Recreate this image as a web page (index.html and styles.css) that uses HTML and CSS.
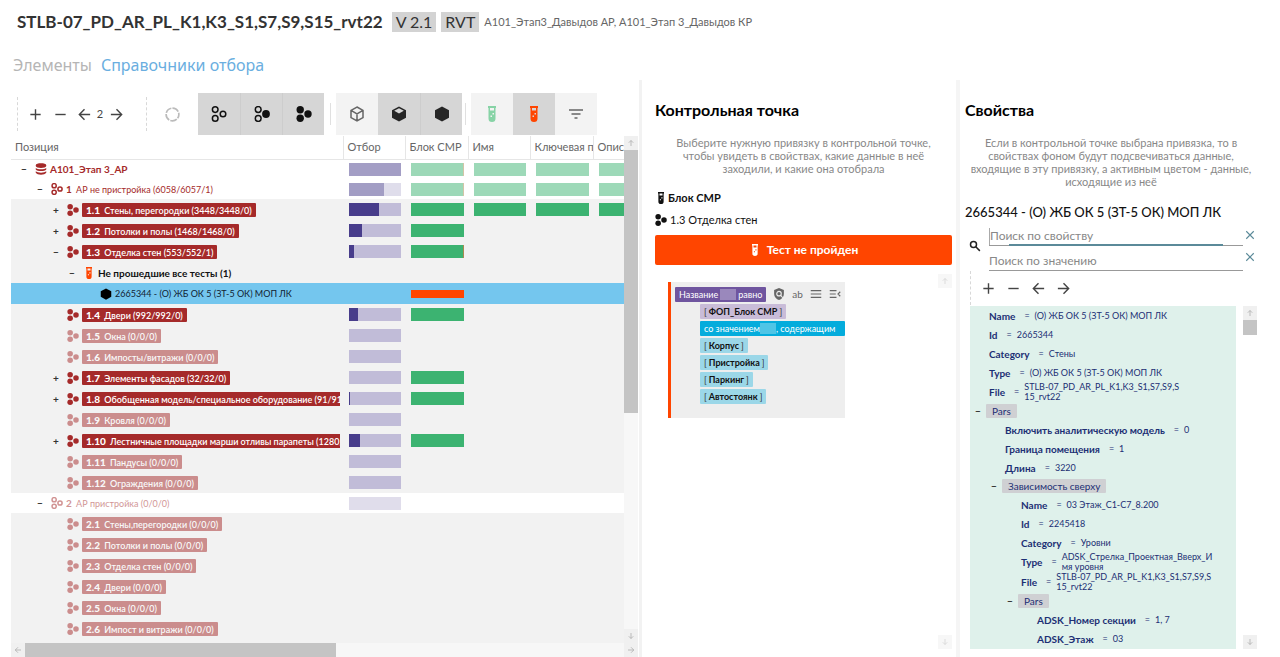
FILE: index.html
```html
<!DOCTYPE html>
<html lang="ru">
<head>
<meta charset="utf-8">
<title>Справочники отбора</title>
<link rel="stylesheet" href="styles.css">
</head>
<body>
<svg class="sprite" aria-hidden="true">
  <symbol id="plus" viewBox="0 0 16 16"><path d="M8 2.5v11M2.5 8h11"/></symbol>
  <symbol id="minus" viewBox="0 0 16 16"><path d="M2.5 8h11"/></symbol>
  <symbol id="left" viewBox="0 0 16 16"><path d="M14 8H2.5M8 2.5 2.5 8 8 13.5"/></symbol>
  <symbol id="right" viewBox="0 0 16 16"><path d="M2 8h11.500M8 2.5 13.500 8 8 13.500"/></symbol>
  <symbol id="up" viewBox="0 0 16 16"><path d="M8 14V3M3.500 7.500 8 3l4.500 4.500"/></symbol>
  <symbol id="down" viewBox="0 0 16 16"><path d="M8 2v11M3.500 8.500 8 13l4.500-4.500"/></symbol>
  <symbol id="cross" viewBox="0 0 16 16"><path d="M3 3l10 10M13 3 3 13"/></symbol>
  <symbol id="spin" viewBox="0 0 16 16"><circle cx="8" cy="8" r="6.800" stroke-width="1.800" stroke-dasharray="7.300 1.240" stroke-dashoffset="3"/></symbol>
  <symbol id="open3" viewBox="0 0 16 16"><circle cx="4.200" cy="3.600" r="2.800"/><circle cx="4.200" cy="12.400" r="2.800"/><circle cx="12" cy="8" r="2.800"/></symbol>
  <symbol id="mix3" viewBox="0 0 16 16"><circle cx="4.200" cy="3.500" r="2.900"/><circle cx="4.200" cy="12.500" r="2.900"/><circle cx="12" cy="8" r="3.900" fill="currentColor" stroke="none"/></symbol>
  <symbol id="solid3" viewBox="0 0 16 16"><g fill="currentColor" stroke="none"><circle cx="4.200" cy="3.700" r="3.700"/><circle cx="4.200" cy="12.300" r="3.700"/><circle cx="12" cy="8" r="3.700"/></g></symbol>
  <symbol id="cube" viewBox="0 0 16 16"><path d="M8 1l6 3.400v7.200L8 15l-6-3.400V4.400zM2 4.400 8 8l6-3.600M8 8v7"/></symbol>
  <symbol id="cubetop" viewBox="0 0 16 16"><path fill="currentColor" stroke="none" d="M8 .5l7 3.800v7.400l-7 3.800-7-3.800V4.300z"/><path d="M8 2.200l4.800 2.500L8 7.400 3.200 4.700z" fill="#d6d6d6" stroke="none"/></symbol>
  <symbol id="hex" viewBox="0 0 16 16"><path fill="currentColor" stroke="none" d="M8 .5l7 3.800v7.400l-7 3.800-7-3.800V4.300z"/></symbol>
  <symbol id="tube" viewBox="0 0 16 16"><path fill="currentColor" stroke="none" fill-rule="evenodd" d="M4 0h8v2h-.500v10.500a3.500 3.500 0 0 1-7 0V2H4zM6 2v2.500h4V2zM8.500 7v1.500H10V7zM6.500 9.500V11H8V9.500z"/></symbol>
  <symbol id="filter" viewBox="0 0 16 16"><path d="M1 4h14M3.500 8h9M6.500 12h3"/></symbol>
  <symbol id="db" viewBox="0 0 16 16"><path fill="currentColor" stroke="none" d="M1 3C1-.500 15-.500 15 3v1c0 3.500-14 3.500-14 0zM1 6.500c2 2.500 12 2.500 14 0V8.500c-2 3-12 3-14 0zM1 11c2 2.500 12 2.500 14 0v2c-2 3.500-12 3.500-14 0z"/></symbol>
  <symbol id="search" viewBox="0 0 16 16"><circle cx="6" cy="6" r="4"/><path d="M9 9l5.500 5.500"/></symbol>
  <symbol id="shield" viewBox="0 0 16 16"><path fill="currentColor" stroke="none" d="M8 0l6.500 2.500V8c0 4-3 7-6.500 8-3.500-1-6.500-4-6.500-8V2.500z"/><circle cx="8" cy="7.500" r="3" stroke="#eee"/><path d="M10 9.500l3 3.500" stroke="#eee"/></symbol>
  <symbol id="lines" viewBox="0 0 16 16"><path d="M1 3.500h14M1 8h14M1 12.500h14"/></symbol>
  <symbol id="linesback" viewBox="0 0 16 16"><path d="M1 3.500h9M1 8h8M1 12.500h9M15 5l-3 3 3 3"/></symbol>
</svg>

<header class="top">
  <div class="title-row">
    <h1>STLB-07_PD_AR_PL_K1,K3_S1,S7,S9,S15_rvt22</h1>
    <span class="tag">V 2.1</span>
    <span class="tag">RVT</span>
    <span class="sources">А101_Этап3_Давыдов АР, А101_Этап 3_Давыдов КР</span>
  </div>
  <nav class="tabs">
    <a href="#elements">Элементы</a>
    <a href="#refs" class="active">Справочники отбора</a>
  </nav>
</header>

<main class="panes">
  <section class="pane tree-pane">
    <div class="toolbar">
      <div class="nav-tools">
        <button class="tool" aria-label="Развернуть"><svg><use href="#plus"/></svg></button>
        <button class="tool" aria-label="Свернуть"><svg><use href="#minus"/></svg></button>
        <button class="tool tight" aria-label="Назад"><svg><use href="#left"/></svg></button>
        <span class="level">2</span>
        <button class="tool tight" aria-label="Вперёд"><svg><use href="#right"/></svg></button>
      </div>
      <button class="tool spin" aria-label="Обновить"><svg><use href="#spin"/></svg></button>
      <div class="group">
        <button class="sq on" aria-label="Пустые группы"><svg><use href="#open3"/></svg></button>
        <button class="sq on" aria-label="Частичные группы"><svg><use href="#mix3"/></svg></button>
        <button class="sq on" aria-label="Полные группы"><svg><use href="#solid3"/></svg></button>
      </div>
      <div class="group">
        <button class="sq grey" aria-label="Контур"><svg><use href="#cube"/></svg></button>
        <button class="sq on dark" aria-label="Куб"><svg><use href="#cubetop"/></svg></button>
        <button class="sq on dark" aria-label="Элемент"><svg><use href="#hex"/></svg></button>
      </div>
      <div class="group">
        <button class="sq pass" aria-label="Пройденные"><svg><use href="#tube"/></svg></button>
        <button class="sq on fail" aria-label="Не пройденные"><svg><use href="#tube"/></svg></button>
        <button class="sq grey" aria-label="Фильтр"><svg><use href="#filter"/></svg></button>
      </div>
    </div>

    <div class="grid-box">
      <div class="grid-view">
        <table class="tree">
          <colgroup><col class="c-name"><col><col class="wide"><col><col class="wide"><col class="wide"></colgroup>
          <thead><tr><th>Позиция</th><th>Отбор</th><th>Блок СМР</th><th>Имя</th><th>Ключевая пометка</th><th>Описание</th></tr></thead>
          <tbody>
            <tr class="group-row"><td><div class="node d0"><button class="tog">−</button><svg><use href="#db"/></svg><b>А101_Этап 3_АР</b></div></td><td><div class="bar sel"><i style="width:100%"></i></div></td><td><div class="bar ok edge"></div></td><td><div class="bar ok"></div></td><td><div class="bar ok"></div></td><td><div class="bar ok"></div></td></tr>
            <tr class="group-row"><td><div class="node d1"><button class="tog">−</button><svg><use href="#open3"/></svg><span class="name"><b>1</b> АР не пристройка <em>(6058/6057/1)</em></span></div></td><td><div class="bar sel"><i style="width:68%"></i></div></td><td><div class="bar ok edge"></div></td><td><div class="bar ok"></div></td><td><div class="bar ok"></div></td><td><div class="bar ok"></div></td></tr>
            <tr><td><div class="node d2"><button class="tog">+</button><svg><use href="#solid3"/></svg><span class="chip"><b>1.1</b> Стены, перегородки (3448/3448/0)</span></div></td><td><div class="bar sel"><i style="width:58%"></i></div></td><td><div class="bar ok"></div></td><td><div class="bar ok"></div></td><td><div class="bar ok"></div></td><td><div class="bar ok"></div></td></tr>
            <tr><td><div class="node d2"><button class="tog">+</button><svg><use href="#solid3"/></svg><span class="chip"><b>1.2</b> Потолки и полы (1468/1468/0)</span></div></td><td><div class="bar sel"><i style="width:25%"></i></div></td><td><div class="bar ok"></div></td><td></td><td></td><td></td></tr>
            <tr><td><div class="node d2"><button class="tog">−</button><svg><use href="#solid3"/></svg><span class="chip"><b>1.3</b> Отделка стен (553/552/1)</span></div></td><td><div class="bar sel"><i style="width:9%"></i></div></td><td><div class="bar ok edge"></div></td><td></td><td></td><td></td></tr>
            <tr><td><div class="node d3"><button class="tog">−</button><svg><use href="#tube"/></svg><b>Не прошедшие все тесты (1)</b></div></td><td></td><td></td><td></td><td></td><td></td></tr>
            <tr class="current"><td><div class="node d4"><svg><use href="#hex"/></svg><span>2665344 - (О) ЖБ ОК 5 (ЗТ-5 ОК) МОП ЛК</span></div></td><td></td><td><div class="bar bad"></div></td><td></td><td></td><td></td></tr>
            <tr><td><div class="node d2"><span class="tog"></span><svg><use href="#solid3"/></svg><span class="chip"><b>1.4</b> Двери (992/992/0)</span></div></td><td><div class="bar sel"><i style="width:17%"></i></div></td><td><div class="bar ok"></div></td><td></td><td></td><td></td></tr>
            <tr class="off"><td><div class="node d2"><span class="tog"></span><svg><use href="#solid3"/></svg><span class="chip"><b>1.5</b> Окна (0/0/0)</span></div></td><td><div class="bar sel"></div></td><td></td><td></td><td></td><td></td></tr>
            <tr class="off"><td><div class="node d2"><span class="tog"></span><svg><use href="#solid3"/></svg><span class="chip"><b>1.6</b> Импосты/витражи (0/0/0)</span></div></td><td><div class="bar sel"></div></td><td></td><td></td><td></td><td></td></tr>
            <tr><td><div class="node d2"><button class="tog">+</button><svg><use href="#solid3"/></svg><span class="chip"><b>1.7</b> Элементы фасадов (32/32/0)</span></div></td><td><div class="bar sel"></div></td><td><div class="bar ok"></div></td><td></td><td></td><td></td></tr>
            <tr><td><div class="node d2"><button class="tog">+</button><svg><use href="#solid3"/></svg><span class="chip"><b>1.8</b> Обобщенная модель/специальное оборудование (91/91/0)</span></div></td><td><div class="bar sel"><i style="width:2%"></i></div></td><td><div class="bar ok"></div></td><td></td><td></td><td></td></tr>
            <tr class="off"><td><div class="node d2"><span class="tog"></span><svg><use href="#solid3"/></svg><span class="chip"><b>1.9</b> Кровля (0/0/0)</span></div></td><td><div class="bar sel"></div></td><td></td><td></td><td></td><td></td></tr>
            <tr><td><div class="node d2"><button class="tog">+</button><svg><use href="#solid3"/></svg><span class="chip"><b>1.10</b> Лестничные площадки марши отливы парапеты (1280/1280/0)</span></div></td><td><div class="bar sel"><i style="width:21%"></i></div></td><td><div class="bar ok"></div></td><td></td><td></td><td></td></tr>
            <tr class="off"><td><div class="node d2"><span class="tog"></span><svg><use href="#solid3"/></svg><span class="chip"><b>1.11</b> Пандусы (0/0/0)</span></div></td><td><div class="bar sel"></div></td><td></td><td></td><td></td><td></td></tr>
            <tr class="off"><td><div class="node d2"><span class="tog"></span><svg><use href="#solid3"/></svg><span class="chip"><b>1.12</b> Ограждения (0/0/0)</span></div></td><td><div class="bar sel"></div></td><td></td><td></td><td></td><td></td></tr>
            <tr class="group-row off"><td><div class="node d1"><button class="tog">−</button><svg><use href="#open3"/></svg><span class="name"><b>2</b> АР пристройка <em>(0/0/0)</em></span></div></td><td><div class="bar sel"></div></td><td></td><td></td><td></td><td></td></tr>
            <tr class="off"><td><div class="node d2"><span class="tog"></span><svg><use href="#solid3"/></svg><span class="chip"><b>2.1</b> Стены,перегородки (0/0/0)</span></div></td><td></td><td></td><td></td><td></td><td></td></tr>
            <tr class="off"><td><div class="node d2"><span class="tog"></span><svg><use href="#solid3"/></svg><span class="chip"><b>2.2</b> Потолки и полы (0/0/0)</span></div></td><td></td><td></td><td></td><td></td><td></td></tr>
            <tr class="off"><td><div class="node d2"><span class="tog"></span><svg><use href="#solid3"/></svg><span class="chip"><b>2.3</b> Отделка стен (0/0/0)</span></div></td><td></td><td></td><td></td><td></td><td></td></tr>
            <tr class="off"><td><div class="node d2"><span class="tog"></span><svg><use href="#solid3"/></svg><span class="chip"><b>2.4</b> Двери (0/0/0)</span></div></td><td></td><td></td><td></td><td></td><td></td></tr>
            <tr class="off"><td><div class="node d2"><span class="tog"></span><svg><use href="#solid3"/></svg><span class="chip"><b>2.5</b> Окна (0/0/0)</span></div></td><td></td><td></td><td></td><td></td><td></td></tr>
            <tr class="off"><td><div class="node d2"><span class="tog"></span><svg><use href="#solid3"/></svg><span class="chip"><b>2.6</b> Импост и витражи (0/0/0)</span></div></td><td></td><td></td><td></td><td></td><td></td></tr>
            <tr class="off"><td><div class="node d2"><span class="tog"></span><svg><use href="#solid3"/></svg><span class="chip"><b>2.7</b> Элементы фасада (0/0/0)</span></div></td><td></td><td></td><td></td><td></td><td></td></tr>
          </tbody>
        </table>
      </div>
      <div class="vscroll"><span class="arrow"><svg><use href="#up"/></svg></span><div class="track"><div class="thumb tall"></div></div><span class="arrow"><svg><use href="#down"/></svg></span></div>
      <div class="hscroll"><span class="arrow"><svg><use href="#left"/></svg></span><div class="track"><div class="thumb"></div></div><span class="arrow"><svg><use href="#right"/></svg></span></div>
    </div>
  </section>

  <section class="pane check-pane">
    <h2>Контрольная точка</h2>
    <p class="hint">Выберите нужную привязку в контрольной точке, чтобы увидеть в свойствах, какие данные в неё заходили, и какие она отобрала</p>
    <div class="fact strong"><svg><use href="#tube"/></svg>Блок СМР</div>
    <div class="fact"><svg><use href="#solid3"/></svg>1.3 Отделка стен</div>
    <button class="result"><svg><use href="#tube"/></svg>Тест не пройден</button>
    <div class="rule-area">
      <div class="rule">
        <div class="rule-head">
          <span class="pill purple">Название <i class="blank"></i> равно</span>
          <svg class="shield"><use href="#shield"/></svg><span class="ab">ab</span><svg><use href="#lines"/></svg><svg><use href="#linesback"/></svg>
        </div>
        <ul class="rule-list">
          <li class="pill lilac">[ <b>ФОП_Блок СМР</b> ]</li>
          <li class="pill blue">со значением<i class="blank"></i>, содержащим</li>
          <li class="pill sky">[ <b>Корпус</b> ]</li>
          <li class="pill sky">[ <b>Пристройка</b> ]</li>
          <li class="pill sky">[ <b>Паркинг</b> ]</li>
          <li class="pill sky">[ <b>Автостоянк</b> ]</li>
        </ul>
      </div>
      <div class="vscroll faint"><span class="arrow"><svg><use href="#up"/></svg></span><div class="track"></div><span class="arrow"><svg><use href="#down"/></svg></span></div>
    </div>
  </section>

  <section class="pane props-pane">
    <h2>Свойства</h2>
    <p class="hint">Если в контрольной точке выбрана привязка, то в свойствах фоном будут подсвечиваться данные, входящие в эту привязку, а активным цветом - данные, исходящие из неё</p>
    <h3>2665344 - (О) ЖБ ОК 5 (ЗТ-5 ОК) МОП ЛК</h3>
    <div class="search">
      <svg class="lens"><use href="#search"/></svg>
      <div class="fields">
        <div class="field focus"><input type="text" placeholder="Поиск по свойству" aria-label="Поиск по свойству"></div>
        <div class="field"><input type="text" placeholder="Поиск по значению" aria-label="Поиск по значению"></div>
      </div>
      <div class="clears">
        <button aria-label="Очистить свойство"><svg><use href="#cross"/></svg></button>
        <button aria-label="Очистить значение"><svg><use href="#cross"/></svg></button>
      </div>
    </div>
    <div class="nav-tools props-tools">
      <button class="tool" aria-label="Развернуть"><svg><use href="#plus"/></svg></button>
      <button class="tool" aria-label="Свернуть"><svg><use href="#minus"/></svg></button>
      <button class="tool" aria-label="Назад"><svg><use href="#left"/></svg></button>
      <button class="tool" aria-label="Вперёд"><svg><use href="#right"/></svg></button>
    </div>
    <div class="props-box">
      <div class="props">
        <div class="prop p0"><b>Name</b><span>=</span><span>(О) ЖБ ОК 5 (ЗТ-5 ОК) МОП ЛК</span></div>
        <div class="prop p0"><b>Id</b><span>=</span><span>2665344</span></div>
        <div class="prop p0"><b>Category</b><span>=</span><span>Стены</span></div>
        <div class="prop p0"><b>Type</b><span>=</span><span>(О) ЖБ ОК 5 (ЗТ-5 ОК) МОП ЛК</span></div>
        <div class="prop p0 two"><b>File</b><span>=</span><span class="val">STLB-07_PD_AR_PL_K1,K3_S1,S7,S9,S<br>15_rvt22</span></div>
        <div class="branch p0"><button class="tog">−</button><span class="key">Pars</span></div>
        <div class="prop p1"><b>Включить аналитическую модель</b><span>=</span><span>0</span></div>
        <div class="prop p1"><b>Граница помещения</b><span>=</span><span>1</span></div>
        <div class="prop p1"><b>Длина</b><span>=</span><span>3220</span></div>
        <div class="branch p1"><button class="tog">−</button><span class="key">Зависимость сверху</span></div>
        <div class="prop p2"><b>Name</b><span>=</span><span>03 Этаж_С1-С7_8.200</span></div>
        <div class="prop p2"><b>Id</b><span>=</span><span>2245418</span></div>
        <div class="prop p2"><b>Category</b><span>=</span><span>Уровни</span></div>
        <div class="prop p2 two"><b>Type</b><span>=</span><span class="val">ADSK_Стрелка_Проектная_Вверх_И<br>мя уровня</span></div>
        <div class="prop p2 two"><b>File</b><span>=</span><span class="val">STLB-07_PD_AR_PL_K1,K3_S1,S7,S9,S<br>15_rvt22</span></div>
        <div class="branch p2"><button class="tog">−</button><span class="key">Pars</span></div>
        <div class="prop p3"><b>ADSK_Номер секции</b><span>=</span><span>1, 7</span></div>
        <div class="prop p3"><b>ADSK_Этаж</b><span>=</span><span>03</span></div>
      </div>
      <div class="vscroll"><span class="arrow"><svg><use href="#up"/></svg></span><div class="track clear"><div class="thumb short"></div></div><span class="arrow"><svg><use href="#down"/></svg></span></div>
    </div>
  </section>
</main>
</body>
</html>
```

FILE: styles.css
```css
* { box-sizing: border-box; }
body {
  margin: 0;
  height: 100vh;
  display: flex;
  flex-direction: column;
  overflow: hidden;
  background: #fff;
  color: #111;
  font: 10px/16px Lato, "Open Sans", "Noto Sans", sans-serif;
}
.sprite { display: none; }
svg {
  width: 16px;
  height: 16px;
  flex: none;
  fill: none;
  stroke: currentColor;
  stroke-width: 1.5;
  overflow: visible;
}
button {
  padding: 0;
  border: 0;
  background: none;
  color: inherit;
  font: inherit;
  cursor: pointer;
}
h1, h2, h3, p, ul { margin: 0; padding: 0; }

/* Header */
.top { height: 80px; flex: none; padding: 12px 13px 0; }
.title-row { display: flex; align-items: center; gap: 5px; padding-left: 4px; color: #333; }
h1 { margin-right: 4px; font-size: 17px; line-height: 20px; font-weight: 700; }
.tag { padding: 0 4px; background: #d3d3d3; font-size: 16px; line-height: 20px; }
.sources { color: #666; font-size: 11px; }
.tabs { display: flex; gap: 9px; margin-top: 21px; font: 16px/24px "Noto Sans", sans-serif; }
.tabs a { color: #b5b5b5; text-decoration: none; }
.tabs .active { color: #6aaee0; }

/* Panes */
.panes {
  flex: 1;
  min-height: 0;
  display: grid;
  grid-template-columns: 642fr 318fr 320fr;
}
.pane { min-width: 0; min-height: 0; display: flex; flex-direction: column; }
.tree-pane { padding: 13px 1px 0 11px; border-right: 3px solid #f2f2f2; }
.check-pane { padding: 19px 4px 8px 13px; border-right: 4px solid #f5f5f5; }
.props-pane { padding: 19px 23px 8px 5px; }

/* Toolbar */
.toolbar { display: flex; align-items: center; height: 42px; margin-bottom: 1px; padding-left: 6px; }
.nav-tools {
  display: flex;
  align-items: center;
  height: 34px;
  padding-left: 5px;
  border-left: 1px dashed #d8d8d8;
  color: #444;
}
.tool { width: 25px; height: 25px; display: grid; place-items: center; }
.tool svg { width: 15px; height: 15px; }
.tool.tight { width: 22px; }
.level { width: 10px; text-align: center; font-size: 11px; }
.toolbar .nav-tools { width: 130px; border-right: 1px dashed #d8d8d8; }
.tool.spin { margin: 0 13px; color: #bbb; }
.group { display: flex; }
.group + .group { position: relative; margin-left: 12px; }
.group + .group + .group { margin-left: 9px; }
.group + .group::before {
  content: "";
  position: absolute;
  left: -6px;
  top: 10px;
  height: 22px;
  border-left: 1px solid #e0e0e0;
}
.sq { width: 42px; height: 42px; display: grid; place-items: center; background: #f3f3f3; color: #111; }
.sq.on { background: #d6d6d6; }
.sq.on + .sq.on { border-left: 1px solid #cdcdcd; }
.sq.grey { color: #666; }
.sq.dark { color: #262626; }
.sq.pass { color: #87d3a6; }
.sq.fail { color: #ff4500; }

/* Tree table */
.grid-box {
  flex: 1;
  min-height: 0;
  display: grid;
  grid-template-columns: 1fr 14px;
  grid-template-rows: 1fr 14px;
}
.grid-view { overflow: hidden; min-width: 0; min-height: 0; }
.tree { width: 645px; table-layout: fixed; border-collapse: collapse; }
.tree col { width: 62px; }
.tree col.wide { width: 63px; }
.tree col.c-name { width: 332px; }
.tree th {
  height: 23px;
  padding: 0 0 0 4px;
  border-bottom: 1px solid #e6e6e6;
  color: #666;
  font-size: 11px;
  font-weight: 400;
  text-align: left;
  white-space: nowrap;
  overflow: hidden;
}
.tree th + th { border-left: 1px solid #e6e6e6; }
.tree td { height: 21px; padding: 0 4px 0 6px; background: #f2f2f2; }
.tree td:first-child { padding: 0 3px 0 0; }
.tree .group-row td { height: 20px; background: #fff; }
.tree .current td { background: #74c6ee; }
.node { display: flex; align-items: center; gap: 3px; height: 16px; overflow: hidden; white-space: nowrap; color: #a52a2a; }
.node svg { width: 12px; height: 12px; stroke-width: 2; }
.node.d0 { padding-left: 5px; }
.node.d1 { padding-left: 21px; font-size: 9px; }
.node.d1 .name b { font-size: 10px; }
.node.d2 { padding-left: 37px; font-size: 9px; }
.node.d3 { padding-left: 53px; color: #111; }
.node.d3 svg { color: #ff4500; }
.node.d4 { padding-left: 89px; font-size: 9px; color: #123; }
.node.d4 svg { color: #000; }
.node em { font-style: normal; }
.name b { margin-right: 2px; }
.tog { width: 16px; flex: none; text-align: center; color: #333; font-size: 10px; font-weight: 700; line-height: 14px; }
.chip { height: 14px; line-height: 14px; padding: 0 4px; border-radius: 1px; background: #a52a2a; color: #fff; font-weight: 600; }
.chip b { margin-right: 2px; font-size: 10px; }
.off .node svg, .off .node .chip, .off .node .name { opacity: .5; }
.bar { height: 13px; }
.bar i { display: block; height: 100%; background: #483d8b; }
.bar.sel { background: #c1bcd8; }
.bar.ok { background: #3cb371; }
.bar.edge { border-right: 1px solid #a98a50; }
.bar.bad { height: 8px; background: #ff4500; }
.group-row .bar { opacity: .5; }

/* Scroll bars */
.vscroll { display: flex; flex-direction: column; width: 14px; }
.hscroll { display: flex; height: 14px; grid-column: 1 / -1; }
.arrow { width: 14px; height: 14px; flex: none; display: grid; place-items: center; background: #f0f0f0; color: #aaa; }
.arrow svg { width: 8px; height: 8px; }
.track { flex: 1; background: #f7f7f7; }
.track.clear { background: none; }
.thumb { background: #c4c4c4; }
.hscroll .thumb { width: 52%; height: 100%; }
.thumb.tall { height: 55%; }
.thumb.short { height: 15px; }
.faint { opacity: .5; }
.faint .track { background: none; }

/* Check point */
h2 { font-size: 16px; line-height: 22px; font-weight: 700; color: #000; }
.hint { margin-top: 15px; padding: 0 8px; color: #888; font-size: 11px; line-height: 13px; text-align: center; }
.fact { display: flex; align-items: center; gap: 3px; margin-top: 6px; font-size: 11px; line-height: 16px; }
.fact svg { width: 12px; height: 12px; }
.fact.strong { margin-top: 15px; gap: 1px; font-weight: 700; }
.result {
  display: flex;
  justify-content: center;
  align-items: center;
  gap: 6px;
  height: 30px;
  flex: none;
  margin-top: 7px;
  border-radius: 2px;
  background: #ff4500;
  color: #fff;
  font-size: 12px;
  font-weight: 700;
}
.result svg { width: 12px; height: 12px; }
.rule-area { flex: 1; display: flex; justify-content: space-between; margin-top: 9px; padding-left: 13px; }
.rule { width: 177px; height: 136px; margin-top: 8px; padding: 4px 0 0 4px; border-left: 3px solid #ff4500; background: #eee; }
.rule-head { display: flex; align-items: center; gap: 7px; color: #666; }
.rule-head svg { width: 12px; height: 12px; }
.pill { display: flex; align-items: center; gap: 2px; width: max-content; height: 15px; padding: 0 4px; border-radius: 1px; font-size: 9px; line-height: 15px; color: #333; }
.pill b { color: #111; }
.blank { width: 16px; height: 11px; background: rgba(255, 255, 255, .3); }
.purple { background: #6f559f; color: #fff; }
.rule-list { display: flex; flex-direction: column; gap: 2px; margin-top: 2px; padding-left: 25px; list-style: none; }
.lilac { background: #c9bcd8; }
.rule-list .blue { width: 100%; gap: 0; background: #04acdc; color: #fff; }
.sky { background: #9bd7e8; }

/* Properties */
.props-pane .hint { padding: 0; }
h3 { margin-top: 15px; font-size: 13px; line-height: 18px; font-weight: 500; color: #111; }
.search { display: flex; align-items: center; padding-left: 4px; }
.lens { width: 12px; height: 12px; color: #222; stroke-width: 2; }
.fields { flex: 1; margin-left: 8px; }
.field { position: relative; height: 25px; border-bottom: 1px solid #999; }
.field.focus::after {
  content: "";
  position: absolute;
  left: 8%;
  right: 8%;
  bottom: -1px;
  height: 2px;
  background: #5b8a99;
}
.field input { width: 100%; height: 100%; padding: 4px 0 0; border: 0; outline: 0; background: none; color: #333; font: inherit; font-size: 12px; }
.field input::placeholder { color: #888; opacity: 1; }
.field.focus input { border-left: 1px solid #aaa; border-image: linear-gradient(transparent 30%, #aaa 30%) 1; }
.clears { width: 14px; display: flex; flex-direction: column; gap: 10px; color: #5b8a99; }
.clears button { display: grid; place-items: center; }
.clears svg { width: 12px; height: 12px; }
.props-tools { margin: 0 0 1px 5px; }
.props-box { flex: 1; min-height: 0; display: flex; justify-content: space-between; gap: 7px; padding-left: 5px; }
.props { flex: 1; min-width: 0; overflow: hidden; background: #dff1eb; color: #1c2f74; }
.prop { display: flex; align-items: center; gap: 5px; height: 19px; white-space: nowrap; font-size: 9px; }
.prop b { margin-right: 4px; font-size: 10px; }
.prop.two { height: 20px; }
.val { line-height: 10px; }
.prop.p0 { padding-left: 19px; }
.prop.p1 { padding-left: 35px; }
.prop.p2 { padding-left: 51px; }
.prop.p3 { padding-left: 67px; }
.branch { display: flex; align-items: center; height: 18px; }
.branch.p1 { padding-left: 16px; }
.branch.p2 { padding-left: 32px; }
.branch.p3 { padding-left: 48px; }
.key { height: 14px; padding: 0 6px; border-radius: 1px; background: #cfd0d3; line-height: 14px; }
```
